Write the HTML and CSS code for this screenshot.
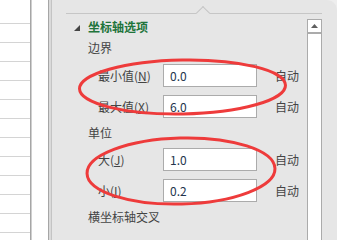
FILE: index.html
```html
<!DOCTYPE html>
<html lang="zh-CN">
<head>
<meta charset="utf-8">
<title>坐标轴选项</title>
<link rel="stylesheet" href="styles.css">
</head>
<body>
<div class="screen">
  <div class="sheet"></div>
  <div class="divider"></div>
  <div class="panel">
    <div class="topline"><span class="notch"></span></div>
    <div class="body">
      <div class="content">
        <div class="heading">
          <svg class="caret" width="6" height="6" viewBox="0 0 6 6"><polygon points="6,0 6,6 0,6" fill="#444"/></svg>
          <span class="heading-text">坐标轴选项</span>
        </div>
        <div class="section sp5">边界</div>
        <div class="field sp8"><span class="label">最小值(<u>N</u>)</span><div class="input">0.0</div><span class="auto">自动</span></div>
        <div class="field sp8"><span class="label">最大值(<u>X</u>)</span><div class="input">6.0</div><span class="auto">自动</span></div>
        <div class="section sp7">单位</div>
        <div class="field sp7"><span class="label">大(<u>J</u>)</span><div class="input">1.0</div><span class="auto">自动</span></div>
        <div class="field sp8"><span class="label">小(<u>I</u>)</span><div class="input">0.2</div><span class="auto">自动</span></div>
        <div class="section sp7">横坐标轴交叉</div>
      </div>
      <div class="scrollbar">
        <div class="sb-btn"><svg width="7" height="4" viewBox="0 0 7 4"><polygon points="3.5,0 7,4 0,4" fill="#606060"/></svg></div>
        <div class="sb-track"></div>
      </div>
    </div>
  </div>
  <svg class="marks" width="337" height="225" viewBox="0 0 337 225">
    <ellipse cx="182.5" cy="87" rx="103" ry="27" transform="rotate(-1 182.5 87)" fill="none" stroke="#ee3b3b" stroke-width="3"/>
    <ellipse cx="181" cy="171" rx="94" ry="33" transform="rotate(-1.5 181 171)" fill="none" stroke="#ee3b3b" stroke-width="3"/>
  </svg>
</div>
</body>
</html>
```
FILE: styles.css
```css
* { box-sizing: border-box; }
html, body { margin: 0; padding: 0; height: 100%; }
body {
  background: #e6e6e6;
  font-family: "Noto Sans CJK SC", "Noto Sans", sans-serif;
  font-size: 12px;
  color: #444444;
  overflow: hidden;
}
.screen {
  position: relative;
  width: 337px;
  height: 100%;
  min-height: 225px;
  overflow: hidden;
  display: flex;
  background: #eeeeee;
}
.sheet {
  width: 30px;
  height: 100%;
  background-color: #ffffff;
  background-image: repeating-linear-gradient(to bottom, transparent 0 18px, #d4d4d4 18px 19px);
  background-position: 0 5px;
}
.divider {
  width: 22px;
  height: 100%;
  background: linear-gradient(to right,
    #a6a6a6 0 1px, #cfcfcf 1px 2px, #ffffff 2px 18px,
    #a6a6a6 18px 19px, #dadada 19px 21px, #c4c4c4 21px 22px);
}
.panel {
  flex: 1;
  height: 100%;
  background: #e6e6e6;
  border-top-right-radius: 10px;
  padding: 0 15px 0 14px;
  display: flex;
  flex-direction: column;
}
.topline {
  position: relative;
  height: 14px;
  border-bottom: 1px solid #c6c6c6;
  flex: none;
}
.notch {
  position: absolute;
  left: 132px;
  top: 8px;
  width: 10px;
  height: 10px;
  background: #e6e6e6;
  border-top: 1px solid #c6c6c6;
  border-left: 1px solid #c6c6c6;
  transform: rotate(45deg);
}
.body {
  flex: 1;
  display: flex;
}
.content {
  flex: 1;
  padding-left: 8px;
  display: flex;
  flex-direction: column;
}
.heading {
  margin-top: 5px;
  height: 16px;
  display: flex;
  align-items: center;
  gap: 8px;
}
.caret { display: block; margin-top: 2px; }
.heading-text {
  color: #21743b;
  font-weight: bold;
  line-height: 16px;
}
.section {
  height: 16px;
  line-height: 16px;
  padding-left: 14px;
}
.field {
  height: 23px;
  display: flex;
  align-items: center;
}
.label {
  width: 89px;
  padding-left: 24px;
  line-height: 16px;
}
.label u { text-underline-offset: 1px; }
.input {
  width: 94px;
  height: 23px;
  border: 1px solid #ababab;
  background: #ffffff;
  padding-left: 6px;
  line-height: 21px;
  color: #23344d;
}
.auto {
  margin-left: 18px;
  line-height: 16px;
}
.sp5 { margin-top: 5px; }
.sp7 { margin-top: 7px; }
.sp8 { margin-top: 8px; }
.scrollbar {
  width: 15px;
  margin-top: 5px;
  border: 1px solid #ababab;
  border-bottom: none;
  background: #ffffff;
  display: flex;
  flex-direction: column;
}
.sb-btn {
  height: 14px;
  border-bottom: 2px solid #ababab;
  display: flex;
  align-items: center;
  justify-content: center;
}
.sb-btn svg { display: block; }
.sb-track { flex: 1; }
.marks {
  position: absolute;
  left: 0;
  top: 0;
  pointer-events: none;
}
```
